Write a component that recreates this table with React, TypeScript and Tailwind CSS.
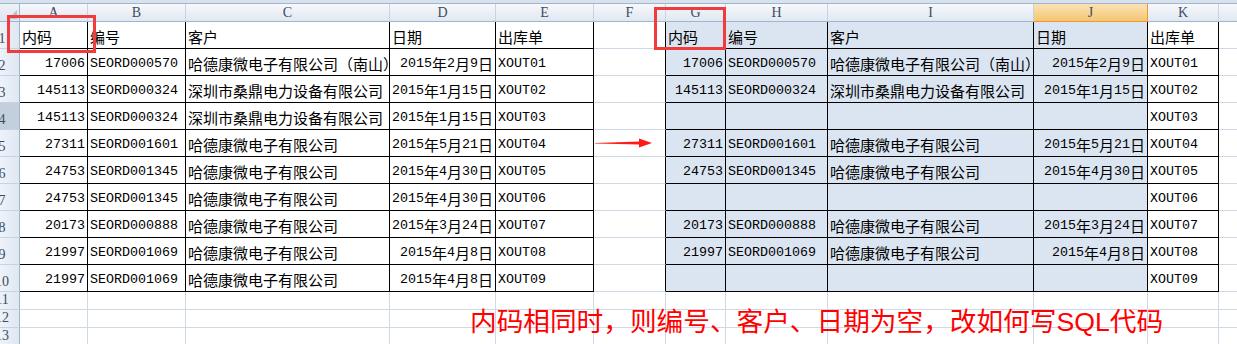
import clsx from 'clsx';

type Col = { key: string; w: string; label: boolean };

// column widths include the right border line
const COLS: Col[] = [
  { key: 'A', w: 'w-[68px]', label: true },
  { key: 'B', w: 'w-[98px]', label: true },
  { key: 'C', w: 'w-[204px]', label: true },
  { key: 'D', w: 'w-[106px]', label: true },
  { key: 'E', w: 'w-[98px]', label: true },
  { key: 'F', w: 'w-[72px]', label: true },
  { key: 'G', w: 'w-[60px]', label: true },
  { key: 'H', w: 'w-[102px]', label: true },
  { key: 'I', w: 'w-[206px]', label: true },
  { key: 'J', w: 'w-[114px]', label: true },
  { key: 'K', w: 'w-[71px]', label: true },
  { key: 'L', w: 'w-[19px]', label: false },
];

type Row = [string, string, string, string, string];

const LEFT: Row[] = [
  ['17006', 'SEORD000570', '哈德康微电子有限公司（南山）', '2015年2月9日', 'XOUT01'],
  ['145113', 'SEORD000324', '深圳市桑鼎电力设备有限公司', '2015年1月15日', 'XOUT02'],
  ['145113', 'SEORD000324', '深圳市桑鼎电力设备有限公司', '2015年1月15日', 'XOUT03'],
  ['27311', 'SEORD001601', '哈德康微电子有限公司', '2015年5月21日', 'XOUT04'],
  ['24753', 'SEORD001345', '哈德康微电子有限公司', '2015年4月30日', 'XOUT05'],
  ['24753', 'SEORD001345', '哈德康微电子有限公司', '2015年4月30日', 'XOUT06'],
  ['20173', 'SEORD000888', '哈德康微电子有限公司', '2015年3月24日', 'XOUT07'],
  ['21997', 'SEORD001069', '哈德康微电子有限公司', '2015年4月8日', 'XOUT08'],
  ['21997', 'SEORD001069', '哈德康微电子有限公司', '2015年4月8日', 'XOUT09'],
];

const RIGHT: Row[] = [
  ['17006', 'SEORD000570', '哈德康微电子有限公司（南山）', '2015年2月9日', 'XOUT01'],
  ['145113', 'SEORD000324', '深圳市桑鼎电力设备有限公司', '2015年1月15日', 'XOUT02'],
  ['', '', '', '', 'XOUT03'],
  ['27311', 'SEORD001601', '哈德康微电子有限公司', '2015年5月21日', 'XOUT04'],
  ['24753', 'SEORD001345', '哈德康微电子有限公司', '2015年4月30日', 'XOUT05'],
  ['', '', '', '', 'XOUT06'],
  ['20173', 'SEORD000888', '哈德康微电子有限公司', '2015年3月24日', 'XOUT07'],
  ['21997', 'SEORD001069', '哈德康微电子有限公司', '2015年4月8日', 'XOUT08'],
  ['', '', '', '', 'XOUT09'],
];

const HEAD: Row = ['内码', '编号', '客户', '日期', '出库单'];

// latin runs in a mono face at half the CJK advance, CJK runs in Noto
function Runs({ text }: { text: string }) {
  const parts = text.split(/([\x00-\x7f]+)/).filter(Boolean);
  return (
    <>
      {parts.map((p, i) =>
        /^[\x00-\x7f]+$/.test(p) ? (
          <span key={i} className="font-['Liberation_Mono',monospace] text-[13.33px]">
            {p}
          </span>
        ) : (
          <span key={i} className="font-['Noto_Sans_CJK_SC',sans-serif] text-[15px]">
            {p}
          </span>
        )
      )}
    </>
  );
}

function Cell({
  col,
  text,
  right,
  fill,
  table,
  black,
}: {
  col: Col;
  text?: string;
  right?: boolean;
  fill?: boolean;
  table?: boolean;
  black?: boolean;
}) {
  return (
    <div
      className={clsx(
        'flex h-full shrink-0 items-end overflow-hidden whitespace-nowrap border-r border-b pb-[4px] leading-[15px] text-black',
        col.w,
        right ? 'justify-end px-[2px]' : 'justify-start pl-[2px] pr-0',
        fill ? 'bg-[#dbe5f1]' : 'bg-white',
        black ? 'border-r-black' : 'border-r-[#d0d7e5]',
        table ? 'border-b-black' : 'border-b-[#d0d7e5]'
      )}
    >
      {text ? <Runs text={text} /> : null}
    </div>
  );
}

function RowHead({ n, active }: { n: number; active?: boolean }) {
  return (
    <div
      className={clsx(
        'flex h-full w-[20px] shrink-0 items-end overflow-hidden border-r border-b border-r-[#9eb6ce] border-b-[#c5d3e2] pb-[1px]',
        active ? 'bg-[#c4cfdd]' : 'bg-gradient-to-r from-[#eef3fa] to-[#dfe7f1]'
      )}
    >
      <div className="ml-[-13px] w-[30px] shrink-0 text-center font-['Liberation_Serif',serif] text-[14px] leading-[16px] text-[#3b4d63]">
        {n}
      </div>
    </div>
  );
}

function DataRow({ n, left, right, head }: { n: number; left: Row; right: Row; head?: boolean }) {
  const cells = [...left, '', ...right, ''];
  return (
    <div className="flex h-[27px]">
      <RowHead n={n} active={n === 4} />
      {COLS.map((c, i) => {
        const inLeft = i < 5;
        const inRight = i >= 6 && i <= 10;
        const num = !head && (i === 0 || i === 3 || i === 6 || i === 9);
        return (
          <Cell
            key={c.key}
            col={c}
            text={cells[i]}
            right={num}
            fill={i >= 6 && i <= 9}
            table={inLeft || inRight}
            black={inLeft || (i >= 5 && i <= 10)}
          />
        );
      })}
    </div>
  );
}

function EmptyRow({ n }: { n: number }) {
  return (
    <div className="flex h-[18px]">
      <RowHead n={n} />
      {COLS.map((c) => (
        <Cell key={c.key} col={c} />
      ))}
    </div>
  );
}

export default function App() {
  return (
    <div className="relative h-[344px] w-[1237px] overflow-hidden bg-white">
      <div className="h-[3px] bg-[#d9e1ec]" />
      {/* column headers */}
      <div className="flex h-[19px] border-t border-t-[#9eb6ce]">
        <div className="relative h-full w-[20px] shrink-0 border-r border-b border-r-[#9eb6ce] border-b-[#9eb6ce] bg-gradient-to-b from-[#eef2f8] to-[#dfe6ef]">
          <div className="absolute right-[2px] bottom-[2px] h-0 w-0 border-b-[9px] border-l-[9px] border-b-[#b5c2d2] border-l-transparent" />
        </div>
        {COLS.map((c) => (
          <div
            key={c.key}
            className={clsx(
              'flex h-full shrink-0 items-center justify-center border-r border-b font-["Liberation_Serif",serif] text-[14px] leading-none',
              c.w,
              c.key === 'J'
                ? 'border-r-[#f29536] border-b-[#f29536] bg-gradient-to-b from-[#fbe3b4] to-[#f4c670] text-[#3b4d63]'
                : 'border-r-[#c5d3e2] border-b-[#9eb6ce] bg-gradient-to-b from-[#f6f8fc] to-[#e1e8f1] text-[#3b4d63]'
            )}
          >
            {c.label ? c.key : null}
          </div>
        ))}
      </div>

      <DataRow n={1} left={HEAD} right={HEAD} head />
      {LEFT.map((r, i) => (
        <DataRow key={i} n={i + 2} left={r} right={RIGHT[i]} />
      ))}
      <EmptyRow n={11} />
      <EmptyRow n={12} />
      <EmptyRow n={13} />

      {/* annotations drawn over the sheet */}
      <div className="absolute left-[7px] top-[15px] h-[38px] w-[89px] border-[3px] border-[#f03c3c]" />
      <div className="absolute left-[654px] top-[7px] h-[43px] w-[72px] border-[3px] border-[#f03c3c]" />
      <svg className="absolute left-[595px] top-[137px]" width="58" height="12" viewBox="0 0 58 12">
        <polygon points="0,6 45,4.6 45,7.6 0,6.6" fill="#ff1a1a" />
        <polygon points="44,1.5 57,6 44,10.5" fill="#ff1a1a" />
      </svg>
      <div className="absolute left-[470px] top-[307px] whitespace-nowrap font-['Noto_Sans_CJK_SC',sans-serif] text-[26.67px] leading-none text-[#ff0000]">
        内码相同时，则编号、客户、日期为空，改如何写
        <span className="font-['Liberation_Sans',sans-serif]">SQL</span>
        代码
      </div>
    </div>
  );
}
